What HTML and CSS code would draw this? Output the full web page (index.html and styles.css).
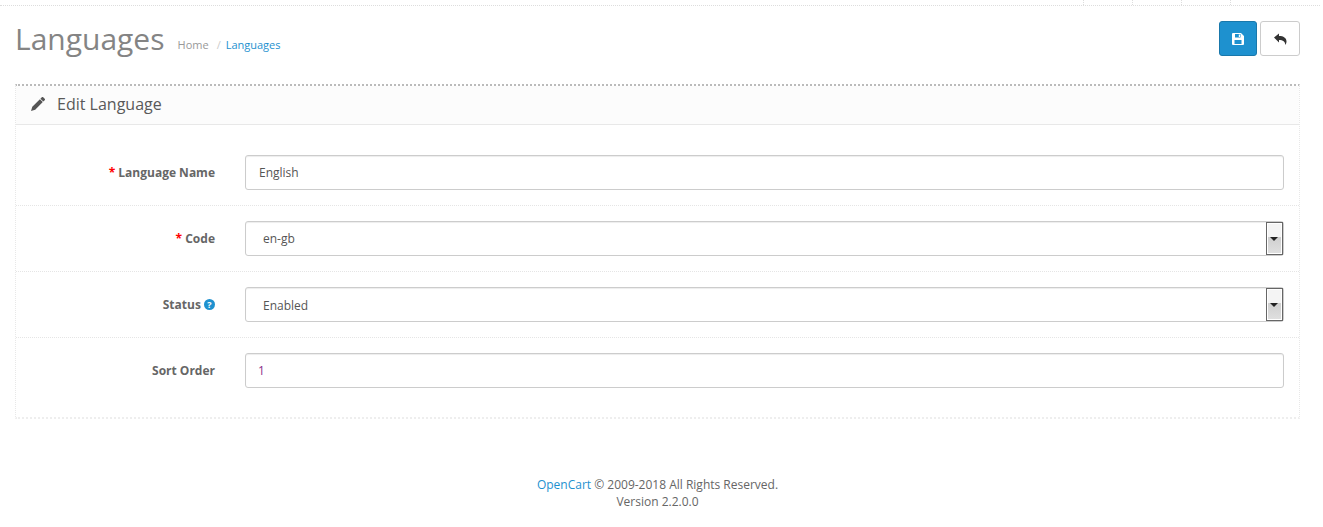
FILE: index.html
```html
<!DOCTYPE html>
<html lang="en">
<head>
    <meta charset="UTF-8">
    <meta name="viewport" content="width=device-width, initial-scale=1.0">
    <title>Languages</title>
    <link rel="stylesheet" href="styles.css">
</head>
<body>
    <header class="top-strip">
        <span class="top-cell"></span>
        <span class="top-cell"></span>
        <span class="top-cell"></span>
        <span class="top-cell"></span>
    </header>

    <div class="content">
        <div class="page-header">
            <h1>Languages</h1>
            <ul class="breadcrumb">
                <li><a href="#">Home</a></li>
                <li><a href="#" class="current">Languages</a></li>
            </ul>
            <div class="actions">
                <button class="btn btn-primary" type="button" title="Save">
                    <svg width="12" height="12" viewBox="0 0 12 12"><path fill="currentColor" fill-rule="evenodd" d="M1 0h8l3 3v8a1 1 0 0 1-1 1H1a1 1 0 0 1-1-1V1a1 1 0 0 1 1-1zm2 1v3.500h5.500V1zm3.800.5h1.200v2.500H6.800zM2.500 7v4h7V7z"/></svg>
                </button>
                <button class="btn btn-default" type="button" title="Cancel">
                    <svg width="13" height="12" viewBox="0 0 13 12"><path fill="#333" d="M0 4.500 5 .5v2.600c4.500 0 7.500 2 7.500 5.400 0 1.500-.6 2.700-1.300 3.500.2-3.400-2.200-5-6.200-5v2.500z"/></svg>
                </button>
            </div>
        </div>

        <div class="panel">
            <div class="panel-heading">
                <svg class="pencil" width="14" height="14" viewBox="0 0 14 14"><path fill="#555" d="M10.800.3a1 1 0 0 1 1.400 0l1.500 1.500a1 1 0 0 1 0 1.400l-1.400 1.400-2.900-2.900zM8.900 2.200l2.900 2.900-7.600 7.600L0 14l1.300-4.200z"/></svg>
                <h3>Edit Language</h3>
            </div>
            <form class="panel-body">
                <div class="form-group">
                    <label class="control-label" for="name"><span class="req">*</span> Language Name</label>
                    <input class="form-control" id="name" type="text" value="English">
                </div>
                <div class="form-group">
                    <label class="control-label" for="code"><span class="req">*</span> Code</label>
                    <div class="select-wrap">
                        <select class="form-control" id="code"><option>en-gb</option></select>
                        <span class="select-arrow"></span>
                    </div>
                </div>
                <div class="form-group">
                    <label class="control-label" for="status">Status <span class="help">?</span></label>
                    <div class="select-wrap">
                        <select class="form-control status-select" id="status"><option>Enabled</option></select>
                        <span class="select-arrow"></span>
                    </div>
                </div>
                <div class="form-group">
                    <label class="control-label" for="sort">Sort Order</label>
                    <input class="form-control sort-value" id="sort" type="text" value="1">
                </div>
            </form>
        </div>

        <footer class="footer">
            <a href="#">OpenCart</a> &copy; 2009-2018 All Rights Reserved.<br>
            Version 2.2.0.0
        </footer>
    </div>
</body>
</html>
```

FILE: styles.css
```css
* {
    box-sizing: border-box;
}
body {
    margin: 0;
    font-family: "Open Sans", sans-serif;
    font-size: 12px;
    color: #666;
    background-color: #fff;
}
a {
    color: #1e91cf;
    text-decoration: none;
}

.top-strip {
    display: flex;
    justify-content: flex-end;
    width: 1320px;
    height: 6px;
    padding-right: 41px;
    border-bottom: 1px dotted #ddd;
}
.top-cell {
    width: 49px;
    border-left: 1px dotted #ddd;
}

.content {
    width: 1315px;
    padding: 0 15px;
}

.page-header {
    display: flex;
    align-items: flex-start;
    height: 78px;
    padding-top: 15px;
}
.page-header h1 {
    margin: 0;
    font-size: 30px;
    font-weight: 400;
    line-height: 36px;
    color: #848484;
}
.breadcrumb {
    display: flex;
    margin: 0;
    padding: 16px 0 0 13px;
    list-style: none;
    font-size: 11px;
    line-height: 15px;
}
.breadcrumb a {
    color: #999;
}
.breadcrumb a.current {
    color: #1e91cf;
}
.breadcrumb li + li::before {
    content: "/";
    padding: 0 5px 0 8px;
    color: #ccc;
}
.actions {
    display: flex;
    gap: 3px;
    margin-left: auto;
}
.btn {
    display: flex;
    align-items: center;
    justify-content: center;
    height: 35px;
    padding: 0;
    border-radius: 3px;
    cursor: pointer;
}
.btn-primary {
    width: 38px;
    color: #fff;
    background-color: #1e91cf;
    border: 1px solid #1978ab;
}
.btn-default {
    width: 40px;
    background-color: #fff;
    border: 1px solid #ccc;
}

.panel {
    height: 335px;
    border: 1px dotted #e8e8e8;
    border-top: 2px dotted #bbb;
    border-bottom: 2px dotted #eee;
}
.panel-heading {
    display: flex;
    align-items: center;
    gap: 12px;
    height: 39px;
    padding: 0 0 3px 15px;
    background-color: #fcfcfc;
    border-bottom: 1px solid #e8e8e8;
}
.panel-heading h3 {
    margin: 0;
    font-size: 16px;
    font-weight: 400;
    color: #595959;
}

.panel-body {
    padding: 15px 15px 0;
}
.form-group {
    display: flex;
    align-items: center;
    margin: 0 -15px;
    padding: 15px 15px 15px 0;
    border-bottom: 1px dotted #e5e5e5;
}
.form-group:last-child {
    border-bottom: 0;
}
.control-label {
    flex: 0 0 199px;
    text-align: right;
    font-weight: 700;
    color: #666;
}
.req {
    color: #f00;
}
.help {
    display: inline-block;
    width: 11px;
    height: 11px;
    border-radius: 50%;
    background-color: #1e91cf;
    color: #fff;
    font-size: 9px;
    line-height: 11px;
    text-align: center;
    vertical-align: 1px;
}
.form-control {
    display: block;
    flex: 0 0 1039px;
    width: 1039px;
    height: 35px;
    margin-left: 30px;
    padding: 8px 13px;
    border: 1px solid #ccc;
    border-radius: 3px;
    background-color: #fff;
    font-family: inherit;
    font-size: 12px;
    color: #555;
    box-shadow: inset 0 1px 1px rgba(0,0,0,0.075);
}
.sort-value {
    padding-left: 12px;
    color: #8b2f8b;
}

.select-wrap {
    position: relative;
}
.select-wrap select {
    appearance: none;
    padding-left: 17px;
}
.select-wrap .status-select {
    padding-top: 9px;
    padding-bottom: 7px;
}
.select-arrow {
    position: absolute;
    top: 1px;
    right: 1px;
    width: 17px;
    height: 33px;
    border: 1px solid #666;
    background: linear-gradient(#f4f4f4 45%, #cfcfcf 45%, #e0e0e0);
    box-shadow: inset 0 0 0 1px #fff;
}
.select-arrow::after {
    content: "";
    position: absolute;
    top: 14px;
    left: 3px;
    border-style: solid;
    border-width: 4px 4px 0;
    border-color: #222 transparent transparent;
}

.footer {
    margin-top: 57px;
    text-align: center;
    line-height: 17px;
    color: #666;
}
```
